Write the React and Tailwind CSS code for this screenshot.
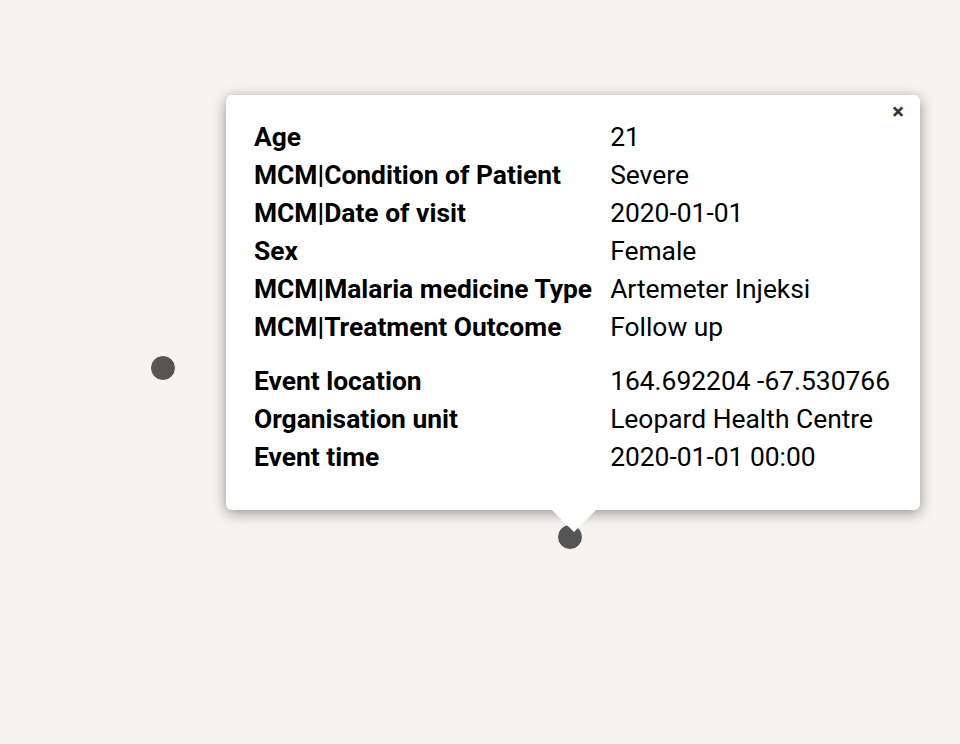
import React from 'react';

const rows = [
  ['Age', '21'],
  ['MCM|Condition of Patient', 'Severe'],
  ['MCM|Date of visit', '2020-01-01'],
  ['Sex', 'Female'],
  ['MCM|Malaria medicine Type', 'Artemeter Injeksi'],
  ['MCM|Treatment Outcome', 'Follow up'],
];

const meta = [
  ['Event location', '164.692204 -67.530766'],
  ['Organisation unit', 'Leopard Health Centre'],
  ['Event time', '2020-01-01 00:00'],
];

function Dot({ className }) {
  return <div className={`absolute w-[26px] h-[26px] rounded-full bg-[#555] border border-white ${className}`} />;
}

export default function App() {
  return (
    <div className="relative w-[960px] h-[744px] bg-[#f6f3f0] overflow-hidden" style={{ fontFamily: 'Roboto, "Liberation Sans", sans-serif' }}>
      <Dot className="left-[150px] top-[355px]" />
      <Dot className="left-[557px] top-[524px]" />

      {/* popup */}
      <div className="absolute left-[226px] top-[95px] w-[694px] bg-white rounded-md shadow-[0_3px_14px_rgba(0,0,0,0.4)] pl-[28px] pr-[28px] pt-[23px] pb-[34px]">
        <button className="absolute right-[16px] top-[6px] text-[22px] font-bold text-[#333] leading-none">×</button>
        <table className="text-[26.4px] text-black leading-[38px]">
          <tbody>
            {rows.map(([k, v]) => (
              <tr key={k}>
                <th className="text-left font-bold pr-[18px] whitespace-nowrap">{k}</th>
                <td className="whitespace-nowrap">{v}</td>
              </tr>
            ))}
            <tr><td colSpan={2} className="h-[16px]" /></tr>
            {meta.map(([k, v]) => (
              <tr key={k}>
                <th className="text-left font-bold pr-[18px] whitespace-nowrap">{k}</th>
                <td className="whitespace-nowrap">{v}</td>
              </tr>
            ))}
          </tbody>
        </table>
        <div className="absolute left-[326px] top-full w-0 h-0 border-l-[22px] border-r-[22px] border-t-[22px] border-l-transparent border-r-transparent border-t-white" />
      </div>
    </div>
  );
}
